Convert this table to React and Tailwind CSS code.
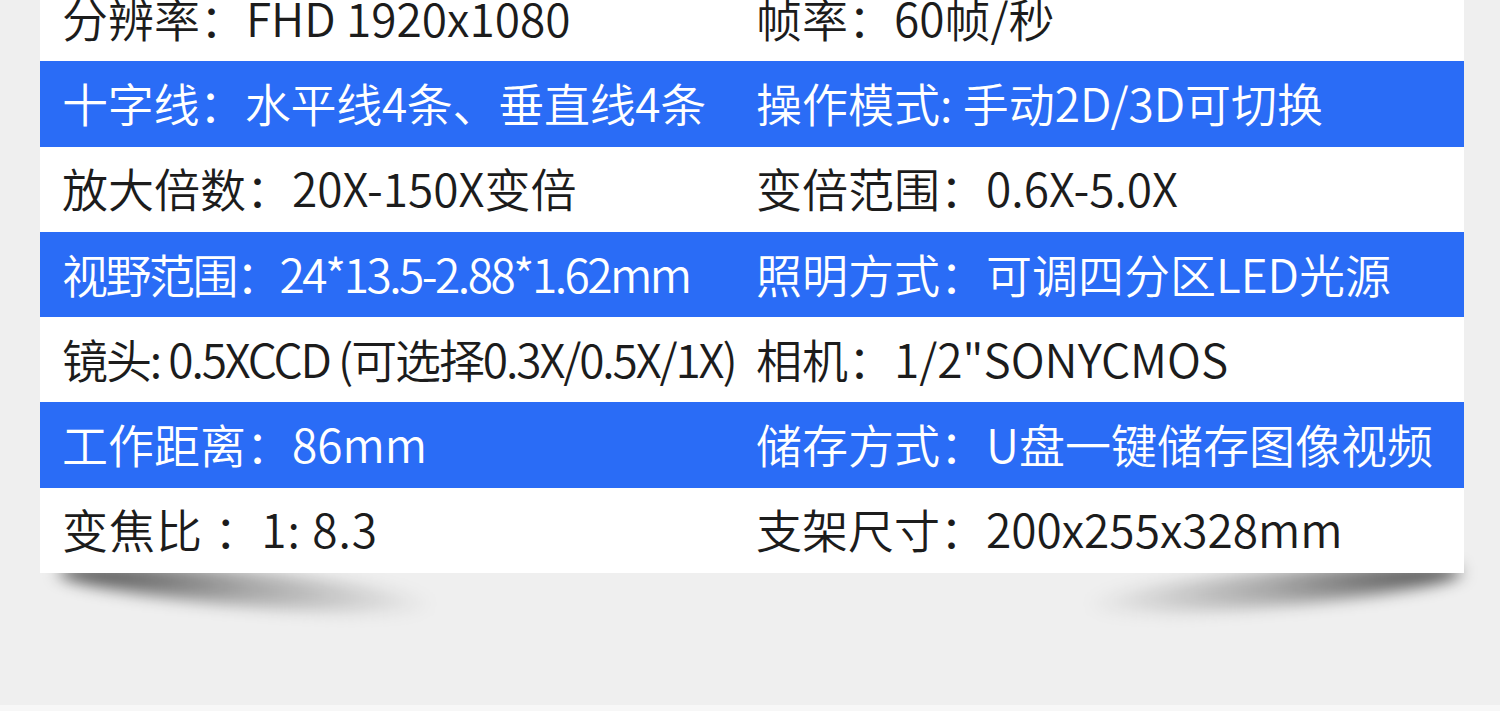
const rows = [
  ['分辨率：FHD 1920x1080', '帧率：60帧/秒'],
  ['十字线：水平线4条、垂直线4条', '操作模式: 手动2D/3D可切换'],
  ['放大倍数：20X-150X变倍', '变倍范围：0.6X-5.0X'],
  ['视野范围：24*13.5-2.88*1.62mm', '照明方式：可调四分区LED光源'],
  ['镜头: 0.5XCCD (可选择0.3X/0.5X/1X)', '相机：1/2"SONYCMOS'],
  ['工作距离：86mm', '储存方式：U盘一键储存图像视频'],
  ['变焦比 ：1: 8.3', '支架尺寸：200x255x328mm'],
]

// per-cell tracking tweaks, the source squeezes a couple of lines
const tight = {
  '1-0': 'tracking-[-0.3px]',
  '3-0': 'tracking-[-2.5px]',
  '4-0': 'tracking-[-2.1px]',
  '6-0': 'tracking-[1px]',
}

export default function App() {
  return (
    <div
      className="w-[1500px] h-[711px] overflow-hidden bg-[#efefef] border-b-[6px] border-[#f7f7f7]"
      style={{ fontFamily: '"Noto Sans CJK SC", "Noto Sans", sans-serif' }}
    >
      <div className="relative ml-[40px] w-[1424px] -mt-[24px]">
        {/* curled paper shadows */}
        <div className="absolute left-[18px] -bottom-[16px] w-[380px] h-[34px] rounded-[50%] bg-gradient-to-r from-black/70 via-black/30 to-transparent blur-[8px] rotate-[5deg] origin-left" />
        <div className="absolute right-[2px] -bottom-[16px] w-[380px] h-[34px] rounded-[50%] bg-gradient-to-l from-black/70 via-black/30 to-transparent blur-[8px] -rotate-[5deg] origin-right" />
        <div className="relative bg-white">
          {rows.map((row, i) => (
            <div
              key={i}
              className={`grid grid-cols-[694px_1fr] items-center h-[85.3px] pl-[22px] pb-[4px] text-[46px] font-[350] leading-none ${
                i % 2 === 1 ? 'bg-[#2a6cf6] text-white' : 'bg-white text-[#1c1c1c]'
              }`}
            >
              <div className={`whitespace-nowrap ${tight[`${i}-0`] || ''}`}>{row[0]}</div>
              <div className="whitespace-nowrap">{row[1]}</div>
            </div>
          ))}
        </div>
      </div>
    </div>
  )
}
